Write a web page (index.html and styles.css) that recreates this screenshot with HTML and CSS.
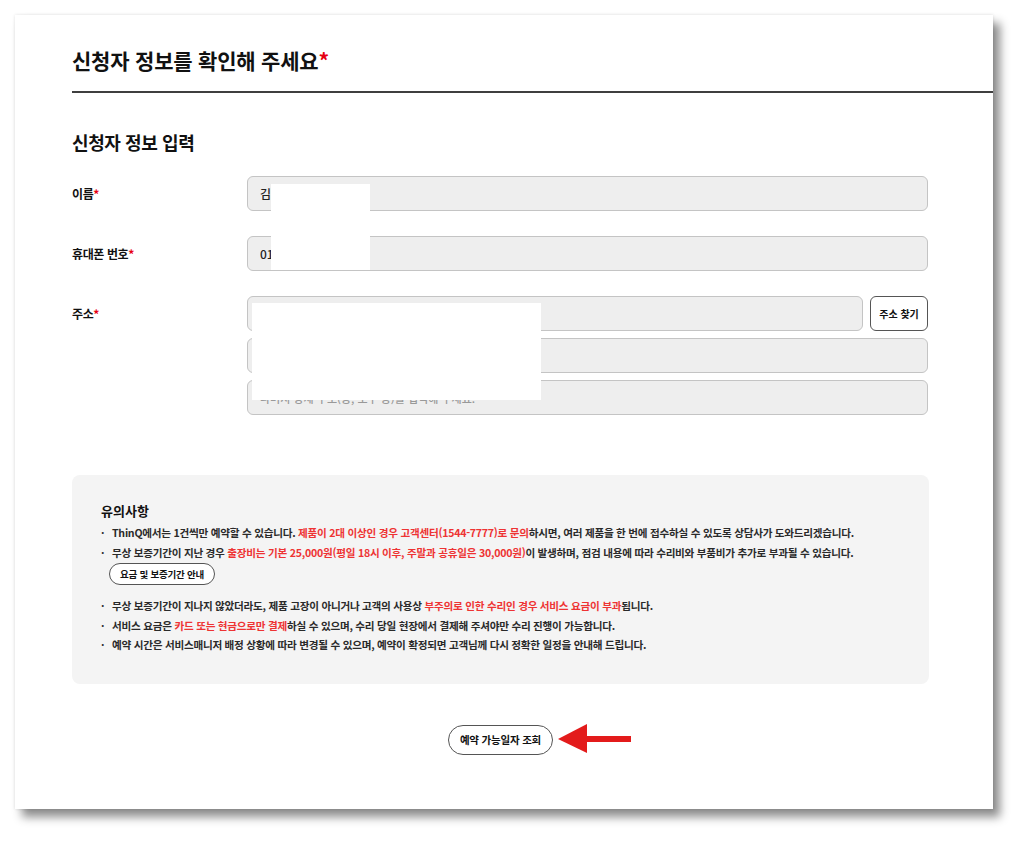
FILE: index.html
```html
<!DOCTYPE html>
<html lang="ko">
<head>
    <meta charset="UTF-8">
    <title>신청자 정보 확인</title>
    <link rel="stylesheet" href="styles.css">
</head>
<body>
<div class="sheet">
    <div class="title-wrap">
        <h1 class="title">신청자 정보를 확인해 주세요<em>*</em></h1>
    </div>

    <h2 class="sub-title">신청자 정보 입력</h2>

    <div class="form">
        <div class="row">
            <label class="label">이름<em>*</em></label>
            <div class="field">
                <input class="input" type="text" value="김" readonly>
            </div>
        </div>
        <div class="row">
            <label class="label">휴대폰 번호<em>*</em></label>
            <div class="field">
                <input class="input" type="text" value="01" readonly>
            </div>
        </div>
        <div class="row">
            <label class="label">주소<em>*</em></label>
            <div class="field address">
                <div class="addr-line">
                    <input class="input" type="text" readonly>
                    <button class="btn-find" type="button">주소 찾기</button>
                </div>
                <input class="input" type="text" readonly>
                <input class="input" type="text" placeholder="나머지 상세 주소(동, 호수 등)를 입력해 주세요." readonly>
            </div>
        </div>
    </div>

    <div class="notice">
        <h3 class="notice-title">유의사항</h3>
        <ul class="notice-list">
            <li>ThinQ에서는 1건씩만 예약할 수 있습니다. <span class="red">제품이 2대 이상인 경우 고객센터(1544-7777)로 문의</span>하시면, 여러 제품을 한 번에 접수하실 수 있도록 상담사가 도와드리겠습니다.</li>
            <li>무상 보증기간이 지난 경우 <span class="red">출장비는 기본 25,000원(평일 18시 이후, 주말과 공휴일은 30,000원)</span>이 발생하며, 점검 내용에 따라 수리비와 부품비가 추가로 부과될 수 있습니다.
                <div><button class="btn-guide" type="button">요금 및 보증기간 안내</button></div>
            </li>
            <li class="gap">무상 보증기간이 지나지 않았더라도, 제품 고장이 아니거나 고객의 사용상 <span class="red">부주의로 인한 수리인 경우 서비스 요금이 부과</span>됩니다.</li>
            <li>서비스 요금은 <span class="red">카드 또는 현금으로만 결제</span>하실 수 있으며, 수리 당일 현장에서 결제해 주셔야만 수리 진행이 가능합니다.</li>
            <li>예약 시간은 서비스매니저 배정 상황에 따라 변경될 수 있으며, 예약이 확정되면 고객님께 다시 정확한 일정을 안내해 드립니다.</li>
        </ul>
    </div>

    <div class="actions">
        <div class="btn-box">
            <button class="btn-search" type="button">예약 가능일자 조회</button>
            <svg class="arrow" width="74" height="30" viewBox="0 0 74 30">
                <polygon points="1,15 30,0 30,29" fill="#e31b1b"/>
                <rect x="29" y="12" width="45" height="6" fill="#e31b1b"/>
            </svg>
        </div>
    </div>

    <!-- 개인정보 가림 -->
    <div class="mask mask-name"></div>
    <div class="mask mask-phone"></div>
    <div class="mask mask-addr"></div>
</div>
</body>
</html>
```

FILE: styles.css
```css
* {
    box-sizing: border-box;
}
html, body {
    min-height: 841px;
}
body {
    margin: 0;
    padding: 15px 0 32px 15px;
    background: #fff;
    font-family: "Noto Sans CJK KR", "Noto Sans", sans-serif;
    color: #111;
}
em {
    font-style: normal;
    color: #e60012;
}
.sheet {
    position: relative;
    width: 978px;
    height: 794px;
    padding: 29px 0 0 57px;
    background: #fff;
    box-shadow: 7px 8px 9px rgba(0, 0, 0, 0.45), 0 0 3px rgba(0, 0, 0, 0.12);
}
.title-wrap {
    padding-bottom: 15px;
    border-bottom: 2px solid #3f3f3f;
}
.title {
    margin: 0;
    font-size: 21px;
    line-height: 32px;
    font-weight: 700;
    letter-spacing: -0.2px;
}
.sub-title {
    margin: 36px 0 0;
    font-size: 18px;
    line-height: 26px;
    font-weight: 700;
    letter-spacing: -0.4px;
}
.form {
    width: 856px;
    margin-top: 21px;
}
.row {
    display: flex;
    margin-bottom: 25px;
}
.row:last-child {
    margin-bottom: 0;
}
.label {
    width: 175px;
    flex-shrink: 0;
    font-size: 12px;
    line-height: 35px;
    font-weight: 700;
    letter-spacing: -0.4px;
}
.field {
    flex: 1;
    display: flex;
    flex-direction: column;
    gap: 7px;
}
.addr-line {
    display: flex;
    gap: 7px;
}
.input {
    width: 100%;
    height: 35px;
    padding: 0 12px;
    border: 1px solid #c4c4c4;
    border-radius: 6px;
    background: #eee;
    font-family: inherit;
    font-size: 12px;
    font-weight: 500;
    color: #222;
    outline: none;
}
.input::placeholder {
    color: #999;
    font-size: 11px;
}
.btn-find {
    flex-shrink: 0;
    width: 58px;
    height: 35px;
    border: 1px solid #555;
    border-radius: 6px;
    background: #fff;
    font-family: inherit;
    font-size: 10px;
    font-weight: 700;
    color: #111;
    padding: 0;
}
.notice {
    width: 857px;
    margin-top: 60px;
    padding: 26px 29px 29px;
    background: #f4f4f4;
    border-radius: 8px;
}
.notice-title {
    margin: 0 0 2px;
    font-size: 13px;
    line-height: 20px;
    font-weight: 700;
}
.notice-list {
    margin: 0;
    padding: 0;
    list-style: none;
}
.notice-list li {
    position: relative;
    padding-left: 11px;
    font-size: 10.6px;
    line-height: 19.5px;
    font-weight: 700;
    color: #2a2a2a;
    letter-spacing: -0.25px;
}
.notice-list li:before {
    content: "·";
    position: absolute;
    left: 0;
    top: 0;
    font-weight: 700;
}
.notice-list li.gap {
    margin-top: 11px;
}
.red {
    color: #ee3333;
}
.btn-guide {
    margin: 1px 0 0 -3px;
    width: 106px;
    height: 22px;
    padding: 0;
    border: 1px solid #555;
    border-radius: 11px;
    background: #fff;
    font-family: inherit;
    font-size: 9.5px;
    font-weight: 700;
    color: #111;
    letter-spacing: -0.2px;
}
.actions {
    width: 857px;
    margin-top: 41px;
    display: flex;
    justify-content: center;
}
.btn-box {
    position: relative;
}
.btn-search {
    width: 105px;
    height: 30px;
    padding: 0;
    border: 1.5px solid #555;
    border-radius: 15px;
    background: #fff;
    font-family: inherit;
    font-size: 10.5px;
    font-weight: 700;
    color: #111;
    letter-spacing: -0.2px;
}
.arrow {
    position: absolute;
    left: 109px;
    top: -1px;
}
.mask {
    position: absolute;
    background: #fff;
}
.mask-name {
    left: 256px;
    top: 169px;
    width: 99px;
    height: 28px;
}
.mask-phone {
    left: 256px;
    top: 220px;
    width: 99px;
    height: 35px;
}
.mask-addr {
    left: 237px;
    top: 288px;
    width: 289px;
    height: 97px;
}
```
